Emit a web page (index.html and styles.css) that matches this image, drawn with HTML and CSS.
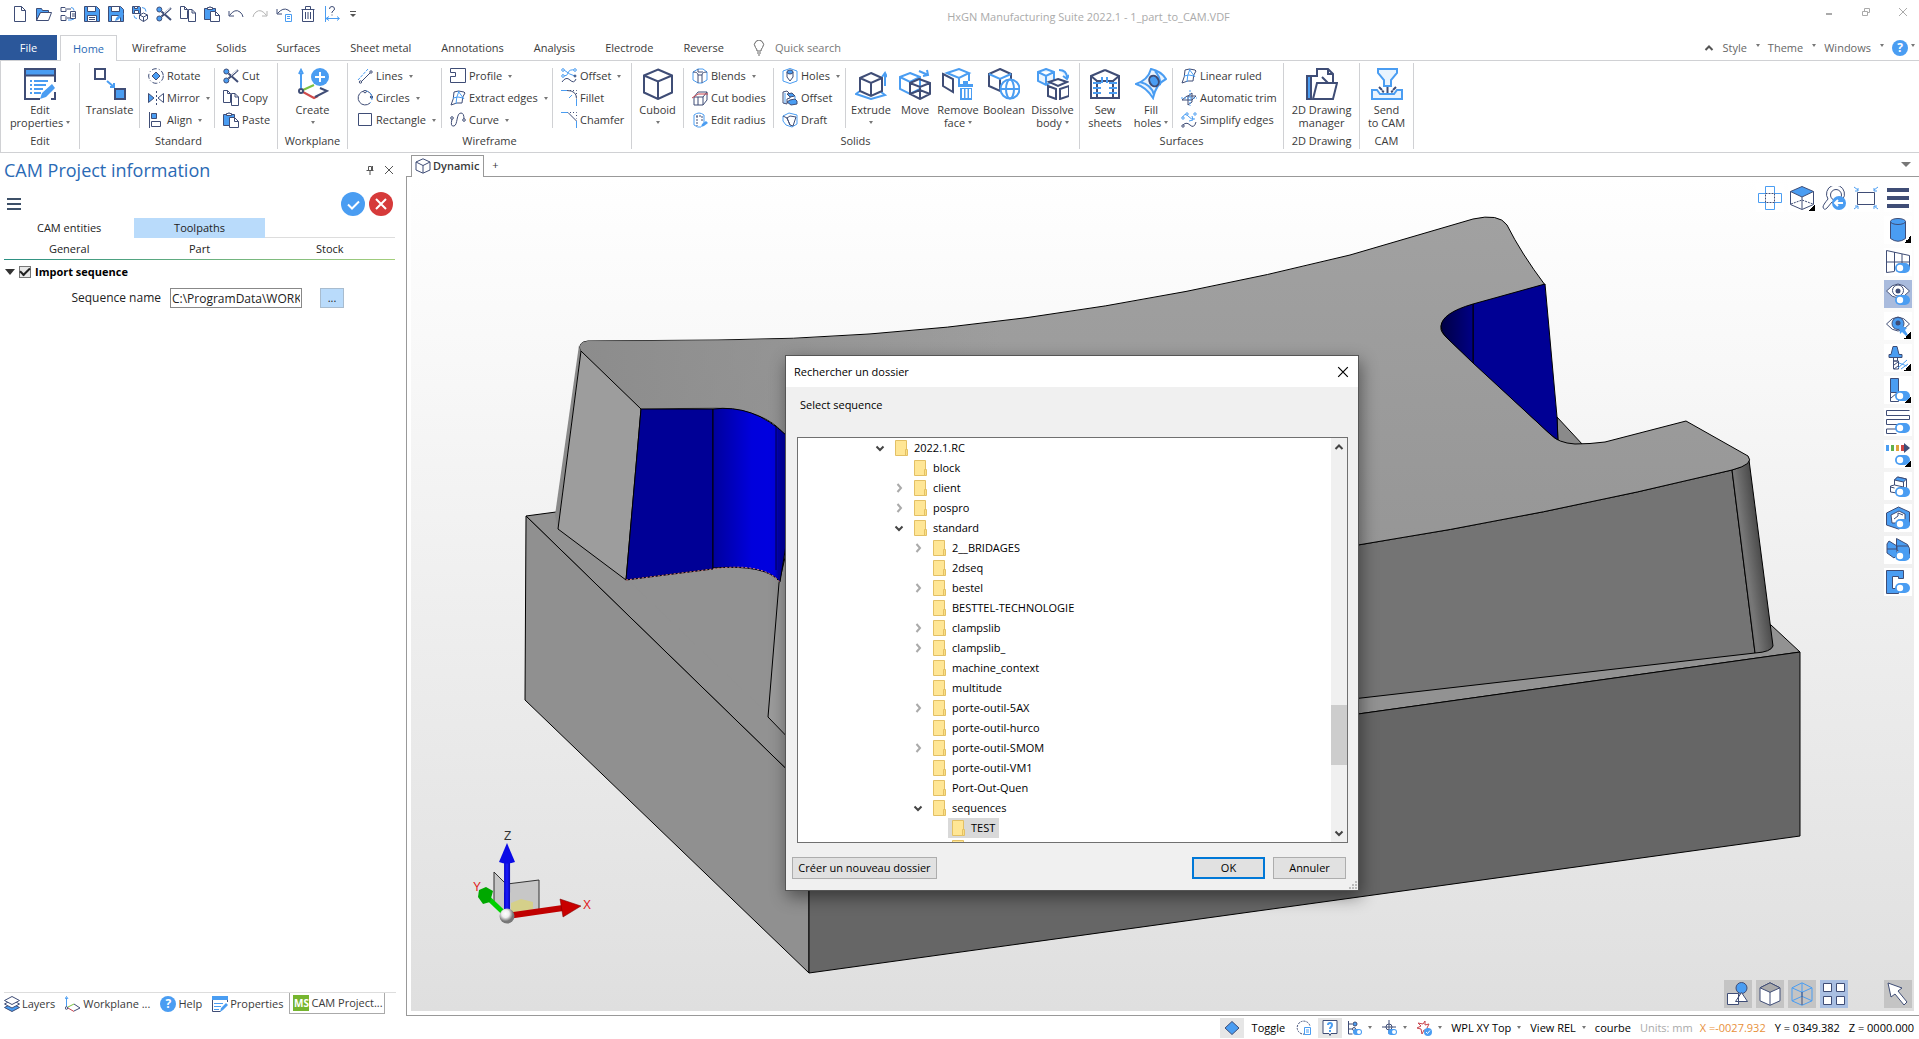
FILE: index.html
```html
<!DOCTYPE html>
<html lang="en">
<head>
<meta charset="utf-8">
<title>HxGN Manufacturing Suite 2022.1 - 1_part_to_CAM.VDF</title>
<link rel="stylesheet" href="styles.css">
</head>
<body>
<svg class="sprite" aria-hidden="true">
  <defs>
    <!-- quick access, 16px grid -->
    <symbol id="new" viewBox="0 0 16 16"><path class="w" d="M2.5 .5h7l4 4v11h-11zM9.500 .5v4h4"/></symbol>
    <symbol id="open" viewBox="0 0 16 16"><path class="f" d="M.5 14.500v-12h5l1 2h6v2h-8z"/><path class="w" d="M4.500 6.500h11l-3 8h-12z"/></symbol>
    <symbol id="tree" viewBox="0 0 16 16"><path d="M1 1.500h4l1 1v3h-5zM1 9.500h4l1 1v4h-5zM7 3h4M7 12h4M10.500 5.500h5v7h-5zM12 8h3M12 10h3"/><path class="b" d="M11 1.500q3 0 3 3M8 14h3l3-1"/></symbol>
    <symbol id="save" viewBox="0 0 16 16"><path class="f" d="M.5 .5h12l3 3v12h-15z"/><path class="w" d="M3.500 .5h8v5h-8zM3.500 9.500h9v6h-9zM5 11.500h6M5 13.500h6"/></symbol>
    <symbol id="saveas" viewBox="0 0 16 16"><path class="f" d="M.5 .5h12l3 3v12h-15z"/><path class="w" d="M3.500 .5h8v5h-8zM3.500 9.500h9v6h-9z"/><path class="sb" d="M7 15l1-3 6-6 2 2-6 6z"/></symbol>
    <symbol id="export" viewBox="0 0 16 16"><path class="f" d="M.5 .5h7l1 1v6h-8z"/><path class="w" d="M2.500 .5h3v2h-3zM2.500 4.500h4v3h-4z"/><path class="b" d="M10 1.500q4 0 4 4M2 9.500q0 3 3 3"/><path class="w" d="M11.500 7l4 2v4l-4 2.500-4-2.500v-4zM7.500 9l4 2 4-2M11.500 11v4.500"/></symbol>
    <symbol id="cut" viewBox="0 0 16 16"><path class="t" d="M5.500 5.500L15 14M5.500 10.500L15 2"/><path class="hl" d="M8 7.500L14.500 2"/><circle class="f" cx="3.300" cy="3.500" r="2.500"/><circle class="f" cx="3.300" cy="12.500" r="2.500"/></symbol>
    <symbol id="copy" viewBox="0 0 16 16"><path class="w" d="M7.500 4.500v8h-7v-12h4l3 3zM4.500 .5v3h3"/><path class="w" d="M8.500 3.500h3.500l3.500 3.500v8.500h-7zM12 3.500v3.500h3.500"/></symbol>
    <symbol id="paste" viewBox="0 0 16 16"><path class="f" d="M.5 2.500h11v11h-11z"/><path class="w" d="M3.500 3.500v-2h2l.5-1 .5 1h2v2zM6.500 5.500h5l4 4v6h-9zM11.500 5.500v4h4"/></symbol>
    <symbol id="undo" viewBox="0 0 16 16"><path d="M1 5v5h5M1.500 9.500Q7 2 12 6q2.500 2 3 5"/></symbol>
    <symbol id="redo" viewBox="0 0 16 16"><path class="g" d="M15 5v5h-5M14.500 9.500Q9 2 4 6q-2.500 2-3 5"/></symbol>
    <symbol id="undolist" viewBox="0 0 16 16"><path d="M1 3v5h5M1.500 7.500Q7 1 12 4q2 1 2.500 2"/><path class="b w" d="M9.500 8.500h6v7h-6zM11 10.500h3M11 12.500h3"/></symbol>
    <symbol id="trash" viewBox="0 0 16 16"><path d="M1.500 3.500h13M5.500 3v-2.500h5v2.500M2.500 3.500v12h11v-12M5.500 6v7M8 6v7M10.500 6v7"/></symbol>
    <symbol id="measure" viewBox="0 0 16 16"><path class="b" d="M1.500 0v16M15 12.500h-13M5 10.500l-3 2 3 2M13 10.500l2.500 2-2.500 2"/><path d="M5.500 3q0-2.500 2.500-2.500t2.500 2.500q0 1-1.500 2t-1 2M8 8.500v1"/></symbol>
    <!-- ribbon, 16px grid -->
    <symbol id="rotate" viewBox="0 0 16 16"><circle cx="8" cy="8" r="7.300" stroke-dasharray="5 2 1 2"/><path class="f" d="M8 4l4 4-4 4-4-4z"/></symbol>
    <symbol id="mirror" viewBox="0 0 16 16"><path class="f" d="M.5 3.500L6 8 .5 12.500z"/><path d="M15.500 3.500L10 8l5.500 4.500z"/><path d="M8.500 1v14" stroke-dasharray="2 2"/></symbol>
    <symbol id="align" viewBox="0 0 16 16"><path d="M1.500 0v16M3.500 9.500h9v5h-9z"/><path class="f" d="M3.500 1.500h5v5h-5z"/></symbol>
    <symbol id="lines" viewBox="0 0 16 16"><path class="b" d="M1 12L11 1" stroke-dasharray="3 1"/><path d="M4 14L14 4"/><circle class="w" cx="3.500" cy="14" r="1.200"/><circle class="w" cx="14" cy="4" r="1.200"/></symbol>
    <symbol id="circles" viewBox="0 0 16 16"><path d="M14.500 5A7 7 0 1 0 13 13"/><path class="b" d="M8 1a7 7 0 0 1 5 12" stroke-dasharray="3 2"/><circle class="w" cx="8" cy="1.500" r="1.300"/><circle class="f" cx="14.500" cy="7" r="1.200"/></symbol>
    <symbol id="rect" viewBox="0 0 16 16"><path d="M1.500 1.500h13v12h-13z"/></symbol>
    <symbol id="profile" viewBox="0 0 16 16"><path d="M.5 .5h15v14h-15v-6h5v-4h-5z"/></symbol>
    <symbol id="mesh" viewBox="0 0 16 16"><path d="M4 2q4-2 10 0l1 1q-3 3-3 10-5-1-11 2Q4 9 4 2z"/><path class="b" d="M9 1q-3 6-3 13M3 8q5-2 10 0M8 1l6 8"/></symbol>
    <symbol id="curve" viewBox="0 0 16 16"><path d="M2 7q-2 8 2 7c4-1 2-13 7-13q3 0 3 6"/><circle class="w" cx="2" cy="6" r="1.300"/><circle class="w" cx="14" cy="8" r="1.300"/></symbol>
    <symbol id="offsetc" viewBox="0 0 16 16"><path class="b" d="M1 7Q6 9 7 5t7-3M3 2q6 5 11 6"/><path d="M1 14q4-6 8-2t6-1"/><circle class="b w" cx="2" cy="2" r="1.300"/><circle class="b w" cx="14" cy="2" r="1.300"/><circle class="b w" cx="2" cy="8" r="1.300"/><circle class="f" cx="14" cy="8" r="1"/></symbol>
    <symbol id="fillet" viewBox="0 0 16 16"><path class="b" d="M0 .5h6M15.500 9v7M8 8l3-3"/><path d="M6 .5q9.500 0 9.500 8"/><path d="M9 .5h6.500v6" stroke-dasharray="1 2"/></symbol>
    <symbol id="chamfer" viewBox="0 0 16 16"><path class="b" d="M0 .5h7M15.500 9v7"/><path d="M7 .5l8.500 8.500"/><path d="M9 .5h6.500v6" stroke-dasharray="1 2"/></symbol>
    <symbol id="blends" viewBox="0 0 16 16"><path class="b" d="M1 4l5-3h5l4 3v8l-5 3h-4l-5-3z"/><path d="M1 4q5 0 5 3v8M15 4q-5 0-5 3v8M6 7h4M6 1v3h5"/></symbol>
    <symbol id="cutbody" viewBox="0 0 16 16"><path d="M2 7l4-5h9v8l-4 5h-9zM2 7h9v8M11 7l4-5M6 7v8"/><path class="r" d="M0 8l6-4h10"/></symbol>
    <symbol id="editrad" viewBox="0 0 16 16"><path class="b" d="M2 3q5-4 10 0v9M2 3v10q4 3 7 2"/><path d="M4 4h6M5 4v10M10 4v6" stroke-dasharray="2 1"/><path class="sb" d="M9 15l1-3 4-3 2 2-4 3z"/></symbol>
    <symbol id="holes" viewBox="0 0 16 16"><path class="b" d="M1 3l7-2.500 7 2.500v10l-7 2.500-7-2.500z"/><path d="M5 4v5l3 4 3-4v-5"/><ellipse class="f" cx="8" cy="4" rx="3" ry="2"/></symbol>
    <symbol id="offsets" viewBox="0 0 16 16"><path d="M1 2l4-1 3 3v4l-3 1v5l-4-1z"/><path class="f" d="M5 4l5-1 3 3-5 1zM8 10l5-1 2 2v3l-6 1-4-3z"/><path class="b" d="M3 3v10M13 6v3"/></symbol>
    <symbol id="draft" viewBox="0 0 16 16"><path class="b" d="M1 4l6-3 8 2v9l-5 3-6-2-3-4z"/><path d="M5 6l3-2 6 1-3 9-3-1zM1 4l4 2 3 7"/></symbol>
    <symbol id="trim" viewBox="0 0 16 16"><path d="M1 10l5-4h9l-4 4zM7 6l4-3v9l-4 3z"/><path class="b" d="M9 0v16M0 8h16" stroke-dasharray="2 1"/></symbol>
    <symbol id="simplify" viewBox="0 0 16 16"><path class="b" d="M1 6q3-6 6-2t7 3M11 4l1 4-4 1"/><path d="M1 14q4-5 8-1t6-3"/><circle class="b w" cx="2" cy="6" r="1.200"/><circle class="b w" cx="6" cy="2" r="1.200"/><circle class="b w" cx="14" cy="2" r="1.200"/><circle class="w" cx="2" cy="14" r="1.200"/></symbol>
    <!-- ribbon, 32px grid -->
    <symbol id="editprops" viewBox="0 0 32 32"><path class="f n" d="M1 1h30v6h-30z"/><path class="t" d="M31 14v-13h-30v30h15M1 7.500h30M31 24v7h-4"/><path class="bt" d="M6 13h2M10 13h14M6 17h2M10 17h12M6 21h2M10 21h9M6 25h2M10 25h7"/><path class="sb" d="M16 31l2-6 10-9 3 4-9 9zM25 18l4 4"/></symbol>
    <symbol id="translate" viewBox="0 0 32 32"><path class="t" d="M1 1h10v10h-10z"/><path class="t f" d="M21 21h10v10h-10z"/><path class="bt" d="M13 13l7 6M20 15v4h-4"/></symbol>
    <symbol id="create" viewBox="0 0 32 32"><path class="bt" d="M4 20v-15M2 6l2-4 2 4"/><path class="rt" d="M6 24l11 6 4-2"/><path class="gt" d="M6 22l11-5"/><path class="t" d="M18 29l12-6-7-3"/><circle class="w t" cx="4" cy="23" r="2"/><circle class="sb" cx="23" cy="9" r="9"/><path class="wt" d="M23 4v10M18 9h10"/></symbol>
    <symbol id="cuboid" viewBox="0 0 32 32"><path class="t" d="M16 1.500l14 6v17l-14 6.500-14-6.500v-17zM2 7.500l14 6 14-6M16 13.500v17"/></symbol>
    <symbol id="extrude" viewBox="0 0 32 32"><path class="bt" d="M5 23l-4 3 15 5 14-4-4-3M30 18v-11M27 9l3-4 2 4"/><path class="t w" d="M16 5l11 5v13l-11 5-11-5v-13zM5 10l11 5 11-5M16 15v13"/></symbol>
    <symbol id="move" viewBox="0 0 32 32"><path class="bt" d="M11 5l10 4v12l-10 5-10-5v-12zM1 9l10 5 10-5M11 14v12M20 3l9 4M28 2l1 5-5 1"/><path class="t" d="M20 11l11 4v11l-10 5-10-5v-11zM11 15l10 4 10-4M21 19v12M11 26l10-4 10 4"/></symbol>
    <symbol id="removeface" viewBox="0 0 32 32"><path class="bt" d="M5 5l12-4 10 4-10 5zM17 10v8M27 5v8"/><path class="t w" d="M1 6l10 5v13l-10-6z"/><path class="sb" d="M16 16h15v3h-15zM21 13h5v3h-5zM18 20h12v12h-12z"/><path class="wt" d="M21 21v9M24.500 21v9M28 21v9"/></symbol>
    <symbol id="boolean" viewBox="0 0 32 32"><path class="t w" d="M12 1l11 5v12l-11 5-11-5v-12zM12 11v12"/><path class="bt" d="M1 6l11 5 11-5"/><circle class="bt w" cx="22" cy="21" r="9.500"/><ellipse class="bt" cx="22" cy="21" rx="4" ry="9.500"/><path class="bt" d="M13 21h18"/></symbol>
    <symbol id="dissolve" viewBox="0 0 32 32"><path class="bt lf" d="M9 1l8 3v9l-8 4-8-4v-9zM1 4l8 4 8-4M9 8v9M22 2q8 0 8 8M26 8l4 3 2-4"/><path class="t w" d="M21 11l9 3-9 4-9-4zM11 18l8 3v10l-8-3zM23 21l9-3v10l-9 3z"/></symbol>
    <symbol id="sew" viewBox="0 0 32 32"><path class="t" d="M16 2l14 6v22h-6v-17l6-5M16 2l-14 6v22h6v-17l-6-5M8 13h16M8 30h16"/><path class="bt" d="M4 15h8M4 20h8M4 25h8M20 15h8M20 20h8M20 25h8M13 9v6M18 9v6"/></symbol>
    <symbol id="fillh" viewBox="0 0 32 32"><path class="bt lf" d="M1 16Q13 12 16 1q10 2 15 10-10 5-13 19-7-11-17-14zM5 14q12 3 14 13M20 3q6 7 5 14"/><ellipse class="t f" cx="19" cy="13" rx="4.500" ry="5.500" transform="rotate(-30 19 13)"/></symbol>
    <symbol id="drawing" viewBox="0 0 32 32"><path class="f t" d="M1 8h4v23h-4z"/><path class="t w" d="M5 31v-23h6v-7h11l5 5v10h-4M22 1v5h5"/><path class="t w" d="M11 15h20l-4 16h-20zM16 9l6 6"/></symbol>
    <symbol id="sendcam" viewBox="0 0 32 32"><path class="bt lf" d="M7 1h19v4l-6 7v6h-7v-6l-6-7zM1 22h5l3 4h14l3-4h5v9h-30z"/><path class="t" d="M16.500 19v6M8 19l3 3M25 19l-3 3M11 23l2 1M22 23l-2 1"/></symbol>
    <!-- viewport, 24px grid -->
    <symbol id="unfold" viewBox="0 0 24 24"><path class="b" d="M7.500 .5h9v7h7v9h-7v7h-9v-7h-7v-9h7z"/><path d="M7.500 7.500h9v9h-9z" stroke-dasharray="2 1"/></symbol>
    <symbol id="topview" viewBox="0 0 24 24"><path d="M.5 5.500v13l11.500 5 11.500-5v-13M12 11v12"/><path class="f" d="M12 .5l11.500 5-11.500 5.500-11.500-5.500z"/><path d="M1 18l11-4 11 4" stroke-dasharray="2 1"/></symbol>
    <symbol id="zoomprev" viewBox="0 0 24 24"><path d="M6 13a9 9 0 1 1 8 4l-4-1-5 6q-3 3-4-1 0-2 5-8z"/><circle cx="14" cy="9" r="5.500"/><circle class="sb" cx="17" cy="17" r="7"/><path class="wt" d="M21 17h-8M16 14l-3 3 3 3"/></symbol>
    <symbol id="fit" viewBox="0 0 24 24"><path d="M3.500 6.500h17v12h-17z"/><path class="b" d="M0 1l4 3M24 1l-4 3M0 23l4-3M24 23l-4-3M1 5h3v-3M23 5h-3v-3M1 20h3v3M23 20h-3v3"/></symbol>
    <symbol id="bars" viewBox="0 0 24 24"><path class="sn" d="M1 2h22v4h-22zM1 10h22v4h-22zM1 18h22v4h-22z"/></symbol>
    <symbol id="cyl" viewBox="0 0 24 24"><path class="f" d="M4.500 3.500v17q7.500 5.500 15 0v-17"/><ellipse class="f" cx="12" cy="3.500" rx="7.500" ry="3"/></symbol>
    <symbol id="toggle" viewBox="0 0 24 24"><rect class="sb" x="9" y="13" width="15" height="10" rx="5"/><circle class="wf" cx="14" cy="18" r="3.200"/></symbol>
    <symbol id="grid" viewBox="0 0 24 24"><path d="M.5 .5l23 5v12M.5 .5v22l8-1M.5 12h23M8.500 2v19M16 4v9"/></symbol>
    <symbol id="eye" viewBox="0 0 24 24"><path class="w" d="M.5 9q11.500-14 23 0-11.500 14-23 0z"/><circle cx="12" cy="8.500" r="5.500"/><circle class="sn" cx="12" cy="9" r="2.500"/></symbol>
    <symbol id="eyepick" viewBox="0 0 24 24"><path class="w" d="M.5 10q11.500-14 23 0-11.500 14-23 0z"/><circle class="f" cx="12" cy="9.500" r="6"/><circle class="sn" cx="12" cy="9" r="2.500"/><path class="sb" d="M13 11l8 3-2 2 3 5-2 1-4-4-2 2z"/></symbol>
    <symbol id="tool" viewBox="0 0 24 24"><path class="f" d="M7 .5h4l2 8h3v3h-13v-3h2z"/><path d="M7.500 12v3h4v-3M7.500 15v8h5v-8zM8 19l4-3M8 23l4-3"/><path class="b" d="M12 22l9-8M13 17l8 3M15 23l7-5"/></symbol>
    <symbol id="cutter" viewBox="0 0 24 24"><path class="f" d="M4.500 .5h8v14h-8z"/><path class="w" d="M4.500 14.500h8v9h-8zM5 20l6-5"/></symbol>
    <symbol id="path" viewBox="0 0 24 24"><path d="M23.500 .5h-23v5h23v4h-23v5h15M10 19h-9.500v4.500h10M.5 19v4"/></symbol>
    <symbol id="speed" viewBox="0 0 24 24"><path class="sb" d="M0 3h3v6h-3z"/><path fill="#62b04c" stroke="none" d="M5 3h3v6h-3z"/><path fill="#e0a33c" stroke="none" d="M10 3h3v6h-3z"/><path fill="#c44" stroke="none" d="M15 3h4v6h-4z"/><path class="sn" d="M18 1l6 5-6 5z"/></symbol>
    <symbol id="step" viewBox="0 0 24 24"><path class="w" d="M8.500 6l3-3 9 2v9l-3 6-13-2v-6l4-1z"/><path class="f" d="M8.500 6l3-3 9 2-3 3z"/><path d="M17.500 8v6M8.500 11l9 2M4.500 13l4 1"/></symbol>
    <symbol id="block" viewBox="0 0 24 24"><path class="f" d="M.5 7l12-6 11 5v13l-11 4-12-4z"/><path class="w" d="M5 9l8-4 6 3v9h-13zM8 13l4-3v-3l5 2"/></symbol>
    <symbol id="split" viewBox="0 0 24 24"><path class="f" d="M1 6l2-3 8 5v9l-3 3-7-5zM10.500 .5l11 6 2 4v9l-6-2-7-6zM1 11h9M11 8h11"/></symbol>
    <symbol id="clamp" viewBox="0 0 24 24"><path class="f" d="M.5 .5h17v8h-5v-2h-6v12h6v5h-12z"/></symbol>
    <symbol id="shapes" viewBox="0 0 24 24"><circle class="f" cx="15.500" cy="6" r="5.500"/><path class="w" d="M1.500 11.500h11v11h-11zM15.500 10.500l6 9h-12z"/></symbol>
    <symbol id="solidcube" viewBox="0 0 24 24"><path class="w" d="M12 .8l10 5v13l-10 4.500-10-4.500v-13z"/><path fill="#aaa" d="M2 5.800l10-5 10 5-10 4.500z"/><path d="M12 10v13"/></symbol>
    <symbol id="wirecube" viewBox="0 0 24 24"><path class="b" d="M12 .8l10 5v13l-10 4.500-10-4.500v-13zM2 5.800l10 4.500 10-4.500M2 18.800l10-4.500 10 4.500M12 1v13"/><path d="M12 10v13"/></symbol>
    <symbol id="four" viewBox="0 0 24 24"><path class="w" d="M1.500 1.500h8v8h-8zM14.500 1.500h8v8h-8zM1.500 14.500h8v8h-8zM14.500 14.500h8v8h-8z"/></symbol>
    <symbol id="arrow" viewBox="0 0 24 24"><path class="w" d="M2 1l14 5-4 3 9 11-3 3-9-11-4 3z"/></symbol>
    <!-- status bar and panel, 16px grid -->
    <symbol id="diamond" viewBox="0 0 16 16"><path class="f" d="M8 1.500l7 6.500-7 6.500-7-6.500z"/></symbol>
    <symbol id="loop" viewBox="0 0 16 16"><path d="M9 14a6.500 6.500 0 1 1 5-8" stroke-dasharray="2 1"/><path class="b w" d="M8.500 7.500h6v7h-6zM10 10h3M10 12h3"/></symbol>
    <symbol id="ask" viewBox="0 0 16 16"><path class="w" d="M1 .5h14v13h-6l-1 2-1-2h-6z"/><path class="bt" d="M6 5q0-2 2-2t2 2q0 1-1 2t-1 2M8 10v2"/></symbol>
    <symbol id="tree2" viewBox="0 0 16 16"><path d="M2.500 1v13h4M2.500 4h4M2.500 9h4"/><circle class="f" cx="9" cy="4" r="2"/><circle class="w" cx="8" cy="9" r="1.500"/><rect class="sb" x="7" y="9" width="9" height="6" rx="3"/><circle class="wf" cx="13" cy="12" r="2"/></symbol>
    <symbol id="axis" viewBox="0 0 16 16"><path d="M8 0v14M1 7h14"/><circle cx="8" cy="7" r="3"/><rect class="sb" x="7" y="9" width="9" height="6" rx="3"/><circle class="wf" cx="13" cy="12" r="2"/></symbol>
    <symbol id="burst" viewBox="0 0 16 16"><path class="r" d="M7 4l2-3v4l4-1-2 4 2 3-5-1-2 4-1-5-4-1 4-2-3-3z"/><circle class="sb" cx="12" cy="12" r="4"/><path stroke="#fff" d="M10 12l1.500 1.500 2.500-3"/></symbol>
    <symbol id="layers" viewBox="0 0 16 16"><path class="f" d="M.5 11.500l7.500 4 7.500-4-7.500-4z"/><path class="w" d="M.5 8l7.500 4 7.500-4-7.500-4z"/><path class="w" d="M.5 4.500l7.500 4 7.500-4-7.500-4z"/></symbol>
    <symbol id="wplane" viewBox="0 0 16 16"><path class="b" d="M1.500 13v-11M0 3l1.500-2.500 1.500 2.500"/><path class="r" d="M3 12l6 3.500"/><path stroke="#7ac143" d="M3 11l6-3"/><path d="M9 8l6 4-6 3"/><circle class="w" cx="1.500" cy="12" r="1.300"/></symbol>
    <symbol id="props" viewBox="0 0 16 16"><path d="M15.500 6v-5.500h-15v15h8"/><path class="sb" d="M0 0h16v4h-16zM8 16l1-4 5-5 2 2-5 5z"/><path class="b" d="M2 7.500h9M2 10.500h7M2 13.500h5"/></symbol>
    <symbol id="bulb" viewBox="0 0 16 16"><path class="k" d="M6 11q0-2-1.500-3.500a4.500 4.500 0 1 1 7 0q-1.500 1.500-1.500 3.500zM6 13h4M7 15h2"/></symbol>
    <symbol id="cube" viewBox="0 0 16 16"><path d="M8 .8l7 3.200v8l-7 3.200-7-3.200v-8zM1 4l7 3.500 7-3.500M8 7.500v7.500"/></symbol>
    <symbol id="down" viewBox="0 0 10 10"><path d="M1.500 3.500l3.500 3.500 3.500-3.500"/></symbol>
    <symbol id="right" viewBox="0 0 10 10"><path d="M3.500 1l3.500 4-3.500 4"/></symbol>
    <symbol id="up" viewBox="0 0 10 10"><path d="M1.500 7l3.500-3.500 3.500 3.500"/></symbol>
    <symbol id="x" viewBox="0 0 10 10"><path d="M1 1l8 8M9 1l-8 8"/></symbol>
    <symbol id="folder" viewBox="0 0 13 16"><path fill="#ffe695" stroke="#e3c065" stroke-width="1" d="M.5 .5h11v15h-11z"/><path fill="#fbe083" stroke="#e3c065" stroke-width="1" d="M10.500 9.500h2v6h-2z"/></symbol>
  </defs>
</svg>

<header class="titlebar">
  <nav class="quick" aria-label="Quick access">
    <button aria-label="New"><svg class="ic"><use href="#new"/></svg></button>
    <button aria-label="Open"><svg class="ic"><use href="#open"/></svg></button>
    <button aria-label="Open tree"><svg class="ic"><use href="#tree"/></svg></button>
    <button aria-label="Save"><svg class="ic"><use href="#save"/></svg></button>
    <button aria-label="Save as"><svg class="ic"><use href="#saveas"/></svg></button>
    <button aria-label="Export"><svg class="ic"><use href="#export"/></svg></button>
    <button aria-label="Cut"><svg class="ic"><use href="#cut"/></svg></button>
    <button aria-label="Copy"><svg class="ic"><use href="#copy"/></svg></button>
    <button aria-label="Paste"><svg class="ic"><use href="#paste"/></svg></button>
    <button aria-label="Undo"><svg class="ic"><use href="#undo"/></svg></button>
    <button aria-label="Redo"><svg class="ic"><use href="#redo"/></svg></button>
    <button aria-label="Undo list"><svg class="ic"><use href="#undolist"/></svg></button>
    <button aria-label="Delete"><svg class="ic"><use href="#trash"/></svg></button>
    <button aria-label="Measure"><svg class="ic"><use href="#measure"/></svg></button>
    <button aria-label="Customize"><svg class="w10 dark" viewBox="0 0 10 10"><path d="M2 2.500h6"/><path fill="#555" stroke="none" d="M2 5h6l-3 3z"/></svg></button>
  </nav>
  <h1>HxGN Manufacturing Suite 2022.1 - 1_part_to_CAM.VDF</h1>
  <div class="winbtns">
    <button aria-label="Minimize"><svg class="w10" viewBox="0 0 10 10"><path d="M2 7h6" stroke-width="2"/></svg></button>
    <button aria-label="Restore"><svg class="w10" viewBox="0 0 10 10"><path d="M1.500 4.500h5v4h-5zM3.500 4v-2.500h5v4h-2"/></svg></button>
    <button aria-label="Close"><svg class="w10"><use href="#x"/></svg></button>
  </div>
</header>

<nav class="tabs" aria-label="Ribbon tabs">
  <button class="tab file">File</button>
  <button class="tab active">Home</button>
  <button class="tab">Wireframe</button>
  <button class="tab">Solids</button>
  <button class="tab">Surfaces</button>
  <button class="tab">Sheet metal</button>
  <button class="tab">Annotations</button>
  <button class="tab">Analysis</button>
  <button class="tab">Electrode</button>
  <button class="tab">Reverse</button>
  <label class="search"><svg class="ic"><use href="#bulb"/></svg><input type="text" placeholder="Quick search"></label>
  <div class="tabs-right">
    <button aria-label="Collapse ribbon"><svg class="w10 dark bold"><use href="#up"/></svg></button>
    <button>Style<i class="caret"></i></button>
    <button>Theme<i class="caret"></i></button>
    <button>Windows<i class="caret"></i></button>
    <button class="help" aria-label="Help"><span class="round">?</span><i class="caret"></i></button>
  </div>
</nav>

<section class="ribbon" aria-label="Home">
  <div class="group g-edit">
    <div class="body"><button class="big"><svg><use href="#editprops"/></svg><span>Edit<br>properties <i class="caret"></i></span></button></div>
    <h2>Edit</h2>
  </div>
  <div class="group g-standard">
    <div class="body">
      <button class="big"><svg><use href="#translate"/></svg><span>Translate</span></button>
      <div class="col">
        <button><svg class="ic"><use href="#rotate"/></svg>Rotate</button>
        <button><svg class="ic"><use href="#mirror"/></svg>Mirror<i class="caret"></i></button>
        <button><svg class="ic"><use href="#align"/></svg>Align<i class="caret"></i></button>
      </div>
      <div class="col">
        <button><svg class="ic"><use href="#cut"/></svg>Cut</button>
        <button><svg class="ic"><use href="#copy"/></svg>Copy</button>
        <button><svg class="ic"><use href="#paste"/></svg>Paste</button>
      </div>
    </div>
    <h2>Standard</h2>
  </div>
  <div class="group g-workplane">
    <div class="body"><button class="big"><svg><use href="#create"/></svg><span>Create<br><i class="caret"></i></span></button></div>
    <h2>Workplane</h2>
  </div>
  <div class="group g-wireframe">
    <div class="body">
      <div class="col first">
        <button><svg class="ic"><use href="#lines"/></svg>Lines<i class="caret"></i></button>
        <button><svg class="ic"><use href="#circles"/></svg>Circles<i class="caret"></i></button>
        <button><svg class="ic"><use href="#rect"/></svg>Rectangle<i class="caret"></i></button>
      </div>
      <div class="col">
        <button><svg class="ic"><use href="#profile"/></svg>Profile<i class="caret"></i></button>
        <button><svg class="ic"><use href="#mesh"/></svg>Extract edges<i class="caret"></i></button>
        <button><svg class="ic"><use href="#curve"/></svg>Curve<i class="caret"></i></button>
      </div>
      <div class="col">
        <button><svg class="ic"><use href="#offsetc"/></svg>Offset<i class="caret"></i></button>
        <button><svg class="ic"><use href="#fillet"/></svg>Fillet</button>
        <button><svg class="ic"><use href="#chamfer"/></svg>Chamfer</button>
      </div>
    </div>
    <h2>Wireframe</h2>
  </div>
  <div class="group g-solids">
    <div class="body">
      <button class="big"><svg><use href="#cuboid"/></svg><span>Cuboid<br><i class="caret"></i></span></button>
      <div class="col">
        <button><svg class="ic"><use href="#blends"/></svg>Blends<i class="caret"></i></button>
        <button><svg class="ic"><use href="#cutbody"/></svg>Cut bodies</button>
        <button><svg class="ic"><use href="#editrad"/></svg>Edit radius</button>
      </div>
      <div class="col">
        <button><svg class="ic"><use href="#holes"/></svg>Holes<i class="caret"></i></button>
        <button><svg class="ic"><use href="#offsets"/></svg>Offset</button>
        <button><svg class="ic"><use href="#draft"/></svg>Draft</button>
      </div>
      <button class="big sep"><svg><use href="#extrude"/></svg><span>Extrude<br><i class="caret"></i></span></button>
      <button class="big"><svg><use href="#move"/></svg><span>Move</span></button>
      <button class="big"><svg><use href="#removeface"/></svg><span>Remove<br>face <i class="caret"></i></span></button>
      <button class="big"><svg><use href="#boolean"/></svg><span>Boolean</span></button>
      <button class="big"><svg><use href="#dissolve"/></svg><span>Dissolve<br>body <i class="caret"></i></span></button>
    </div>
    <h2>Solids</h2>
  </div>
  <div class="group g-surfaces">
    <div class="body">
      <button class="big"><svg><use href="#sew"/></svg><span>Sew<br>sheets</span></button>
      <button class="big"><svg><use href="#fillh"/></svg><span>Fill<br>holes <i class="caret"></i></span></button>
      <div class="col">
        <button><svg class="ic"><use href="#mesh"/></svg>Linear ruled</button>
        <button><svg class="ic"><use href="#trim"/></svg>Automatic trim</button>
        <button><svg class="ic"><use href="#simplify"/></svg>Simplify edges</button>
      </div>
    </div>
    <h2>Surfaces</h2>
  </div>
  <div class="group g-drawing">
    <div class="body"><button class="big"><svg><use href="#drawing"/></svg><span>2D Drawing<br>manager</span></button></div>
    <h2>2D Drawing</h2>
  </div>
  <div class="group g-cam">
    <div class="body"><button class="big"><svg><use href="#sendcam"/></svg><span>Send<br>to CAM</span></button></div>
    <h2>CAM</h2>
  </div>
</section>

<main class="work">
  <aside class="panel">
    <header class="panel-head">
      <h2>CAM Project information</h2>
      <button aria-label="Pin"><svg class="w10 dark" viewBox="0 0 10 10"><path d="M3.500 5v-3.500h3v3.500M1.500 5.500h7M5 6v4M7.500 1v4"/></svg></button>
      <button aria-label="Close panel"><svg class="w10 dark"><use href="#x"/></svg></button>
    </header>
    <div class="panel-actions">
      <button class="burger" aria-label="Menu"><i></i><i></i><i></i></button>
      <button class="disc ok" aria-label="Validate"><svg viewBox="0 0 24 24"><path d="M7 12.500l4 4 7-7"/></svg></button>
      <button class="disc no" aria-label="Cancel"><svg viewBox="0 0 24 24"><path d="M7 7l10 10M17 7l-10 10"/></svg></button>
    </div>
    <nav class="panel-nav" aria-label="Sections">
      <button>CAM entities</button><button class="on">Toolpaths</button><span></span>
      <button>General</button><button>Part</button><button>Stock</button>
    </nav>
    <div class="import">
      <i class="tri"></i>
      <input type="checkbox" id="imp" checked><label for="imp">Import sequence</label>
    </div>
    <div class="field">
      <label for="seq">Sequence name</label>
      <input type="text" id="seq" value="C:\ProgramData\WORK">
      <button>...</button>
    </div>
    <nav class="panel-tabs" aria-label="Panels">
      <button><svg class="ic"><use href="#layers"/></svg>Layers</button>
      <button><svg class="ic"><use href="#wplane"/></svg>Workplane ...</button>
      <button><span class="round">?</span>Help</button>
      <button><svg class="ic"><use href="#props"/></svg>Properties</button>
      <button class="on"><span class="ms">MS</span>CAM Project...</button>
    </nav>
  </aside>

  <section class="view">
    <nav class="doctabs" aria-label="Views">
      <button class="doctab"><svg class="ic"><use href="#cube"/></svg>Dynamic</button>
      <button class="plus">+</button>
      <button class="list" aria-label="View list"><i class="caret wide"></i></button>
    </nav>
    <div class="frame">
      <svg class="scene" viewBox="411 177 1503 834" preserveAspectRatio="none" role="img" aria-label="Part and stock model">
        <defs>
          <linearGradient id="top" x1="0" x2="0" y1="217" y2="740" gradientUnits="userSpaceOnUse"><stop offset="0" stop-color="#a1a1a1"/><stop offset="1" stop-color="#909090"/></linearGradient>
          <linearGradient id="topL" x1="579" x2="1000" y1="0" y2="0" gradientUnits="userSpaceOnUse"><stop offset="0" stop-color="#8c8c8c"/><stop offset="1" stop-color="#8c8c8c" stop-opacity="0"/></linearGradient>
          <linearGradient id="round" x1="1737" x2="1767" y1="560" y2="556" gradientUnits="userSpaceOnUse"><stop offset="0" stop-color="#6e6e6e"/><stop offset=".3" stop-color="#777"/><stop offset="1" stop-color="#3c3c3c"/></linearGradient>
          <linearGradient id="blueL" x1="713" x2="790" y1="0" y2="0" gradientUnits="userSpaceOnUse"><stop offset="0" stop-color="#00009c"/><stop offset=".5" stop-color="#0000dc"/><stop offset=".8" stop-color="#0000e0"/><stop offset=".85" stop-color="#0000a8"/></linearGradient>
          <linearGradient id="blueR" x1="1441" x2="1480" y1="0" y2="0" gradientUnits="userSpaceOnUse"><stop offset="0" stop-color="#000044"/><stop offset="1" stop-color="#000094"/></linearGradient>
          <linearGradient id="zaxis" x1="503" x2="511" y1="0" y2="0" gradientUnits="userSpaceOnUse"><stop offset="0" stop-color="#0000b0"/><stop offset=".5" stop-color="#1a1aff"/><stop offset="1" stop-color="#0000a0"/></linearGradient>
          <radialGradient id="ball" cx=".4" cy=".35"><stop offset="0" stop-color="#fff"/><stop offset=".5" stop-color="#eee"/><stop offset="1" stop-color="#777"/></radialGradient>
        </defs>
        <g class="edges">
          <path fill="#929292" d="M526 516l30-4 1215 113 29 27L809 791z"/>
          <path fill="#909090" d="M526 516l-1 184 284 273V791z"/>
          <path fill="#666" d="M809 791l991-139v184L809 973z"/>
          <path fill="#929292" stroke="none" d="M556 511h240v230z"/>
          <path fill="#9b9b9b" d="M779 583l-11 134 60 62h40V545h-80z"/>
          <path fill="#747474" d="M1300 554l58-9q184-29 374-75l23 183-455 52z"/>
          <path fill="url(#round)" d="M1732 470q14-4 17-10l24 186q-2 6-18 7z"/>
          <path fill="#8a8a8a" stroke="none" d="M579 345l2 6-23 178-3-14z"/>
          <path fill="#8a8a8a" d="M1557 417l26 28h-25z"/>
          <path fill="url(#top)" d="M581 351q-4-9 7-10l130-1q300-2 632-85l123-36q26-6 34 6 14 28 38 60l-72 20q-31 9-32 22-1 4 5 10l104 97q8 9 25 10 15 0 30-2l81-21 62 35q7 8-16 14-190 46-374 75H900L785 435q-20-26-69-27l-75 1z"/>
          <path fill="url(#topL)" stroke="none" d="M581 351q-4-9 7-10l130-1q150-1 282-18v220H900L785 435q-20-26-69-27l-75 1z"/>
          <path fill="#9d9d9d" d="M581 351l60 58-15 171-68-51z"/>
          <path fill="#000096" d="M641 409h72v160l-87 11z"/>
          <path fill="url(#blueL)" d="M713 409q40-5 73 26v110l-6 37q-14-18-67-14z"/>
          <path fill="none" stroke="#d88" stroke-dasharray="2 2" d="M626 580l87-11q50-7 67 13"/>
          <path d="M776 426v144" fill="none" opacity=".6"/>
          <path fill="#000094" d="M1545 284l-72 20v59l77 71 8 6-1-23z"/>
          <path fill="url(#blueR)" d="M1473 304q-31 9-32 22 0 6 5 11l27 26z"/>
        </g>
        <path fill="#bbb" fill-opacity=".7" stroke="#333" d="M494 872l13 13v30l-13-12zM507 884l32-4v30l-32 5z"/>
        <path fill="#d8d27a" fill-opacity=".8" d="M511 903l10-4 12 3v7l-22 4z"/>
        <path stroke="#c00000" stroke-width="6" d="M507 916l56-8"/>
        <path fill="#c80000" stroke="#700" stroke-width=".5" d="M560 899l21 7-18 11z"/>
        <path stroke="#00d000" stroke-width="5" d="M507 916l-20-19"/>
        <path fill="#00a800" d="M479 890l7-3 7 4-3 11-7 2-5-7z"/>
        <path stroke="url(#zaxis)" stroke-width="6" d="M507 914l.1-54"/>
        <path fill="#0a0ae6" d="M507 843l8 19q-8 3-16 0z"/>
        <circle cx="507" cy="916" r="7.500" fill="url(#ball)"/>
        <text x="504" y="840" class="ax z">Z</text>
        <text x="473" y="891" class="ax">Y</text>
        <text x="583" y="909" class="ax">X</text>
      </svg>

      <div class="viewbar">
        <button aria-label="Unfold"><svg><use href="#unfold"/></svg></button>
        <button class="flag" aria-label="Top view"><svg><use href="#topview"/></svg></button>
        <button aria-label="Previous zoom"><svg><use href="#zoomprev"/></svg></button>
        <button aria-label="Fit"><svg><use href="#fit"/></svg></button>
        <button aria-label="Menu"><svg><use href="#bars"/></svg></button>
      </div>
      <div class="viewbar side">
        <button class="flag" aria-label="Shading"><svg><use href="#cyl"/></svg></button>
        <button aria-label="Grid"><svg><use href="#grid"/><use href="#toggle"/></svg></button>
        <button class="on" aria-label="Visibility"><svg><use href="#eye"/><use href="#toggle"/></svg></button>
        <button class="flag" aria-label="Pick visibility"><svg><use href="#eyepick"/></svg></button>
        <button class="flag" aria-label="Tool holder"><svg><use href="#tool"/></svg></button>
        <button class="flag" aria-label="Cutter"><svg><use href="#cutter"/><use href="#toggle"/></svg></button>
        <button aria-label="Toolpath"><svg><use href="#path"/><use href="#toggle"/></svg></button>
        <button class="flag" aria-label="Feed colours"><svg><use href="#speed"/><use href="#toggle"/></svg></button>
        <button aria-label="Part"><svg><use href="#step"/><use href="#toggle"/></svg></button>
        <button aria-label="Stock"><svg><use href="#block"/><use href="#toggle"/></svg></button>
        <button aria-label="Fixtures"><svg><use href="#split"/><use href="#toggle"/></svg></button>
        <button aria-label="Machine"><svg><use href="#clamp"/><use href="#toggle"/></svg></button>
      </div>
      <div class="modes">
        <button aria-label="Shapes"><svg><use href="#shapes"/></svg></button>
        <button aria-label="Shaded"><svg><use href="#solidcube"/></svg></button>
        <button aria-label="Wire"><svg><use href="#wirecube"/></svg></button>
        <button class="on" aria-label="Four views"><svg><use href="#four"/></svg></button>
        <button class="pick" aria-label="Select"><svg><use href="#arrow"/></svg></button>
      </div>

      <dialog open class="browse" aria-labelledby="dlg">
        <header><h2 id="dlg">Rechercher un dossier</h2><button aria-label="Close"><svg><use href="#x"/></svg></button></header>
        <p>Select sequence</p>
        <div class="treebox">
          <ul>
            <li class="l1"><svg class="chev"><use href="#down"/></svg><span><svg class="fold"><use href="#folder"/></svg>2022.1.RC</span></li>
            <li class="l2 leaf"><span><svg class="fold"><use href="#folder"/></svg>block</span></li>
            <li class="l2"><svg class="chev shut"><use href="#right"/></svg><span><svg class="fold"><use href="#folder"/></svg>client</span></li>
            <li class="l2"><svg class="chev shut"><use href="#right"/></svg><span><svg class="fold"><use href="#folder"/></svg>pospro</span></li>
            <li class="l2"><svg class="chev"><use href="#down"/></svg><span><svg class="fold"><use href="#folder"/></svg>standard</span></li>
            <li class="l3"><svg class="chev shut"><use href="#right"/></svg><span><svg class="fold"><use href="#folder"/></svg>2__BRIDAGES</span></li>
            <li class="l3 leaf"><span><svg class="fold"><use href="#folder"/></svg>2dseq</span></li>
            <li class="l3"><svg class="chev shut"><use href="#right"/></svg><span><svg class="fold"><use href="#folder"/></svg>bestel</span></li>
            <li class="l3 leaf"><span><svg class="fold"><use href="#folder"/></svg>BESTTEL-TECHNOLOGIE</span></li>
            <li class="l3"><svg class="chev shut"><use href="#right"/></svg><span><svg class="fold"><use href="#folder"/></svg>clampslib</span></li>
            <li class="l3"><svg class="chev shut"><use href="#right"/></svg><span><svg class="fold"><use href="#folder"/></svg>clampslib_</span></li>
            <li class="l3 leaf"><span><svg class="fold"><use href="#folder"/></svg>machine_context</span></li>
            <li class="l3 leaf"><span><svg class="fold"><use href="#folder"/></svg>multitude</span></li>
            <li class="l3"><svg class="chev shut"><use href="#right"/></svg><span><svg class="fold"><use href="#folder"/></svg>porte-outil-5AX</span></li>
            <li class="l3 leaf"><span><svg class="fold"><use href="#folder"/></svg>porte-outil-hurco</span></li>
            <li class="l3"><svg class="chev shut"><use href="#right"/></svg><span><svg class="fold"><use href="#folder"/></svg>porte-outil-SMOM</span></li>
            <li class="l3 leaf"><span><svg class="fold"><use href="#folder"/></svg>porte-outil-VM1</span></li>
            <li class="l3 leaf"><span><svg class="fold"><use href="#folder"/></svg>Port-Out-Quen</span></li>
            <li class="l3"><svg class="chev"><use href="#down"/></svg><span><svg class="fold"><use href="#folder"/></svg>sequences</span></li>
            <li class="l4 leaf"><span class="sel"><svg class="fold"><use href="#folder"/></svg>TEST</span></li>
            <li class="l4 leaf"><span><svg class="fold"><use href="#folder"/></svg></span></li>
          </ul>
          <div class="scroll"><svg><use href="#up"/></svg><i></i><svg><use href="#down"/></svg></div>
        </div>
        <footer>
          <button class="wide">Créer un nouveau dossier</button>
          <button class="default">OK</button>
          <button>Annuler</button>
        </footer>
        <svg class="grip" viewBox="0 0 8 8"><path d="M6 0h2v2H6zM6 3h2v2H6zM6 6h2v2H6zM3 3h2v2H3zM3 6h2v2H3zM0 6h2v2H0z"/></svg>
      </dialog>
    </div>
  </section>
</main>

<footer class="status">
  <button class="hi" aria-label="Toggle mode"><svg class="ic"><use href="#diamond"/></svg></button>
  <span class="toggle-label">Toggle</span>
  <button class="loop" aria-label="Loop"><svg class="ic"><use href="#loop"/></svg></button>
  <button class="hi" aria-label="Hints"><svg class="ic"><use href="#ask"/></svg></button>
  <button aria-label="Tree"><svg class="ic"><use href="#tree2"/></svg><i class="caret"></i></button>
  <button aria-label="Axis"><svg class="ic"><use href="#axis"/></svg><i class="caret"></i></button>
  <button aria-label="Snap"><svg class="ic"><use href="#burst"/></svg><i class="caret"></i></button>
  <button>WPL XY Top<i class="caret"></i></button>
  <button>View REL<i class="caret"></i></button>
  <button>courbe</button>
  <span class="units">Units: mm</span>
  <span class="xpos">X =-0027.932</span>
  <span class="pos">Y = 0349.382</span>
  <span class="pos">Z = 0000.000</span>
</footer>
</body>
</html>
```
FILE: styles.css
```css
:root {
  --navy: #3f4d76;
  --blue: #4a9df2;
  --line: #d0d1d4;
  --ink: #3a3a3a;
}
* { box-sizing: border-box; }
body {
  margin: 0;
  min-height: 100vh;
  display: flex;
  flex-direction: column;
  background: #fff;
  color: var(--ink);
  font: 11px/16px "Open Sans", "Noto Sans", sans-serif;
  overflow: hidden;
}
h1, h2, p, ul { margin: 0; padding: 0; font-weight: 400; font-size: 11px; }
button, input {
  font: inherit;
  color: inherit;
  background: none;
  border: 0;
  padding: 0;
  border-radius: 0;
}
button { white-space: nowrap; }

/* icon drawing classes */
.sprite { position: absolute; width: 0; height: 0; }
svg { display: block; fill: none; stroke: var(--navy); stroke-width: 1; flex: none; }
.ic { width: 16px; height: 16px; }
.w10 { width: 10px; height: 10px; stroke: #aaa; }
.w10.dark { stroke: #555; }
.w10.bold { stroke-width: 2; }
.w { fill: #fff; }
.wf { fill: #fff; stroke: none; }
.f { fill: var(--blue); }
.lf { fill: #eaf4fe; }
.n { stroke: none; }
.b { stroke: var(--blue); }
.hl { stroke: #fff; }
.g { stroke: #b4b4b4; }
.k { stroke: #666; }
.r { stroke: #c8454f; }
.sb { fill: var(--blue); stroke: none; }
.sn { fill: var(--navy); stroke: none; }
.t { stroke-width: 2; }
.bt { stroke: var(--blue); stroke-width: 2; }
.rt { stroke: #d04a4a; stroke-width: 2; }
.gt { stroke: #7ac143; stroke-width: 2; }
.wt { stroke: #fff; stroke-width: 2; }

.caret {
  display: inline-block;
  border: 2px solid transparent;
  border-top: 3px solid #777;
  border-bottom: 0;
  vertical-align: 3px;
}
.caret.wide { border-width: 5px 5px 0; }
.round {
  display: inline-block;
  width: 16px;
  height: 16px;
  border-radius: 50%;
  background: var(--blue);
  color: #fff;
  font-weight: 700;
  font-size: 12px;
  line-height: 16px;
  text-align: center;
}

/* title bar */
.titlebar { display: grid; grid-template-columns: 1fr auto 1fr; height: 35px; align-items: start; }
.quick { display: flex; gap: 8px; padding: 6px 0 0 12px; align-items: center; }
.titlebar h1 { color: #aaa; padding-top: 9px; margin-left: 258px; }
.winbtns { display: flex; justify-content: flex-end; gap: 27px; padding: 7px 11px 0 0; }

/* ribbon tabs */
.tabs { display: flex; height: 26px; border-bottom: 1px solid var(--line); align-items: stretch; }
.tab { padding: 0 15px; }
.tab.file { background: #2b579a; color: #fff; width: 57px; margin-right: 3px; padding: 0; }
.tab.active {
  color: #2a6ab5;
  width: 57px;
  padding: 0;
  border: 1px solid var(--line);
  border-bottom: 0;
  background: #fff;
  margin-bottom: -1px;
  position: relative;
}
.search { display: flex; align-items: center; gap: 8px; padding-left: 12px; }
.search input { width: 100px; height: 16px; }
.search input::placeholder { color: #777; opacity: 1; }
.tabs-right { margin-left: auto; display: flex; align-items: center; padding-right: 4px; color: #666; }
.tabs-right button { display: flex; align-items: center; margin-left: 8px; }
.tabs-right .caret { margin: 0 0 4px 9px; }
.tabs-right .help .caret { margin-left: 3px; }

/* ribbon */
.ribbon { display: flex; height: 92px; border-bottom: 1px solid var(--line); border-left: 1px solid var(--line); }
.group { margin: 2px 0 3px; border-right: 1px solid var(--line); display: grid; grid-template-rows: 1fr 16px; }
.group h2 { text-align: center; }
.body { display: grid; padding-top: 5px; align-items: start; }
.big { display: flex; flex-direction: column; align-items: center; line-height: 13px; }
.big svg { width: 32px; height: 32px; margin-bottom: 3px; }
.big.sep, .col { border-left: 1px solid var(--line); height: 60px; }
.col { display: flex; flex-direction: column; gap: 6px; padding-left: 8px; }
.col.first { border: 0; padding-left: 9px; }
.col button { display: flex; align-items: center; gap: 3px; height: 16px; }
.col .caret { margin-left: 3px; }
.g-edit { width: 79px; }
.g-standard .body { grid-template-columns: 59px 75px 63px; }
.g-workplane { width: 70px; }
.g-wireframe .body { grid-template-columns: 93px 111px 79px; }
.g-solids .body { grid-template-columns: 51px 90px 72px 51px 38px 48px 44px 53px; }
.g-surfaces .body { grid-template-columns: 50px 42px 111px; }
.g-drawing { width: 76px; }
.g-cam { width: 54px; }

/* work area */
.work { flex: 1; display: grid; grid-template-columns: 406px 1fr; min-height: 0; }
.panel { display: flex; flex-direction: column; padding: 0 10px 2px 4px; color: #222; }
.panel-head { display: flex; align-items: center; gap: 9px; height: 34px; padding-right: 2px; }
.panel-head h2 { font-size: 18px; color: #2a6ab5; flex: 1; }
.panel-actions { display: flex; align-items: center; gap: 4px; height: 31px; padding: 2px 3px 0; }
.burger { width: 14px; margin-right: auto; display: grid; gap: 3px; }
.burger i { height: 2px; background: #3d5068; }
.disc { width: 24px; height: 24px; border-radius: 50%; }
.disc svg { stroke: #fff; stroke-width: 2; }
.disc.ok { background: var(--blue); }
.disc.no { background: #d63a3a; }
.panel-nav {
  display: grid;
  grid-template-columns: 1fr 1fr 1fr;
  grid-auto-rows: 20px;
  gap: 1px 0;
  width: 391px;
  border-bottom: 1px solid;
  border-image: linear-gradient(90deg, #2a8f83, #a5cf7c) 1;
}
.panel-nav .on { background: #b9dbfb; }
.panel-nav span { border-bottom: 1px solid #ddd; }
.import { display: flex; align-items: center; gap: 4px; height: 24px; font-weight: 700; color: #000; }
.tri { border: 5px solid transparent; border-top: 6px solid #333; border-bottom: 0; margin-left: 1px; }
.import input {
  appearance: none;
  width: 12px;
  height: 12px;
  margin: 0;
  border: 1px solid #777;
  background: #e8e8e8;
  display: grid;
  place-content: center;
}
.import input:checked::before {
  content: "";
  width: 8px;
  height: 4px;
  border: solid #222;
  border-width: 0 0 2px 2px;
  transform: rotate(-45deg) translate(1px, -1px);
}
.field { display: grid; grid-template-columns: 157px 132px 24px; column-gap: 9px; align-items: center; margin-top: 4px; }
.field label { text-align: right; font-size: 12px; }
.field input { height: 20px; border: 1px solid #888; font-size: 12px; padding: 0 1px; width: 132px; }
.field button { height: 20px; background: #b9dbfb; border: 1px solid #a8bccf; margin-left: 9px; width: 24px; }
.panel-tabs {
  margin: auto 0 0;
  border-top: 1px solid #ddd;
  display: flex;
  color: var(--ink);
}
.panel-tabs button { display: flex; align-items: center; gap: 2px; height: 21px; margin-right: 10px; }
.panel-tabs .on { border: 1px solid #aaa; border-top: 0; padding: 0 1px 0 3px; margin: 0 0 0 -4px; }
.ms { background: #76b52f; color: #fff; font-weight: 700; font-size: 10px; width: 16px; text-align: center; }

.view { display: flex; flex-direction: column; min-width: 0; }
.doctabs { display: flex; align-items: flex-end; height: 23px; padding-left: 5px; position: relative; z-index: 1; }
.doctab {
  display: flex;
  align-items: center;
  gap: 2px;
  height: 22px;
  margin-bottom: -1px;
  padding: 0 4px 2px 3px;
  border: 1px solid #999;
  border-bottom: 0;
  background: #fff;
  font-weight: 600;
}
.plus { margin: 0 0 3px 8px; }
.list { margin: 0 8px 2px auto; }
.frame {
  flex: 1;
  position: relative;
  border: solid #999;
  border-width: 1px 0 1px 1px;
  padding: 0 5px 4px 4px;
  min-height: 0;
}
.scene { width: 100%; height: 100%; background: linear-gradient(#fff, #dfdfdf); stroke: none; }
.edges { stroke: #000; stroke-width: 1; stroke-linejoin: round; }
.ax { font: 12px "Liberation Sans", sans-serif; fill: #e02020; }
.ax.z { fill: #333; }

.viewbar, .modes { position: absolute; display: flex; gap: 4px; right: 7px; }
.viewbar { top: 7px; }
.viewbar.side { top: 39px; flex-direction: column; }
.viewbar button, .modes button { width: 28px; height: 28px; display: grid; place-content: center; position: relative; }
.viewbar button { background: #fff; }
.viewbar svg, .modes svg { width: 24px; height: 24px; }
.viewbar .on { background: #a9bbdd; }
.flag::after {
  content: "";
  position: absolute;
  right: 1px;
  bottom: 1px;
  width: 7px;
  height: 7px;
  background: linear-gradient(135deg, transparent 50%, #000 50%);
}
.modes { bottom: 7px; }
.modes button { background: #c4c4c4; }
.modes .on { background: #a9bfe2; }
.modes .pick { margin-left: 32px; }

/* folder dialog */
.browse {
  position: absolute;
  left: 378px;
  top: 178px;
  width: 574px;
  margin: 0;
  padding: 0;
  border: 1px solid #555;
  background: #f0f0f0;
  color: #000;
  box-shadow: 2px 6px 16px rgba(0, 0, 0, .45);
}
.browse header { display: flex; align-items: center; height: 31px; background: #fff; padding: 0 9px 0 8px; }
.browse h2 { flex: 1; }
.browse header svg { width: 12px; height: 12px; stroke: #000; }
.browse p { padding: 10px 14px 24px; }
.treebox { display: flex; height: 406px; margin: 0 10px 0 11px; border: 1px solid #707070; background: #fff; overflow: hidden; }
.treebox ul { flex: 1; list-style: none; }
.treebox li { display: flex; align-items: center; height: 20px; }
.treebox span { display: flex; align-items: center; gap: 6px; height: 20px; padding: 0 4px; margin-left: 3px; }
.treebox .sel { background: #d9d9d9; }
.l1 { padding-left: 74px; }
.l2 { padding-left: 93px; }
.l3 { padding-left: 112px; }
.l4 { padding-left: 131px; }
.leaf::before { content: ""; width: 16px; }
.chev { width: 16px; height: 10px; stroke: #444; stroke-width: 2; }
.chev.shut { stroke: #aaa; }
.fold { width: 13px; height: 16px; }
.scroll { width: 16px; background: #f0f0f0; display: flex; flex-direction: column; align-items: center; padding: 4px 0; }
.scroll svg { width: 10px; height: 10px; stroke: #444; stroke-width: 2; }
.scroll i { width: 16px; height: 60px; background: #cdcdcd; margin: auto 0 63px; }
.browse footer { display: flex; gap: 8px; padding: 14px 12px 11px 6px; }
.browse footer button { width: 73px; height: 22px; background: #e1e1e1; border: 1px solid #adadad; }
.browse footer .wide { width: 145px; margin-right: auto; }
.browse footer .default { border: 2px solid #0078d7; }
.grip { position: absolute; right: 1px; bottom: 1px; width: 8px; height: 8px; fill: #bbb; stroke: none; }

/* status bar */
.status { display: flex; justify-content: flex-end; align-items: center; height: 23px; padding-right: 5px; color: #000; }
.status button { display: flex; align-items: center; gap: 6px; margin-right: 9px; height: 20px; }
.status .hi { background: #e6e6e6; padding: 0 4px; margin-right: 4px; }
.status .loop { margin-right: 6px; }
.toggle-label { margin: 0 11px 0 4px; }
.units { color: #aaa; margin-right: 7px; }
.xpos { color: #e8903a; }
.pos { margin-left: 9px; }
```
